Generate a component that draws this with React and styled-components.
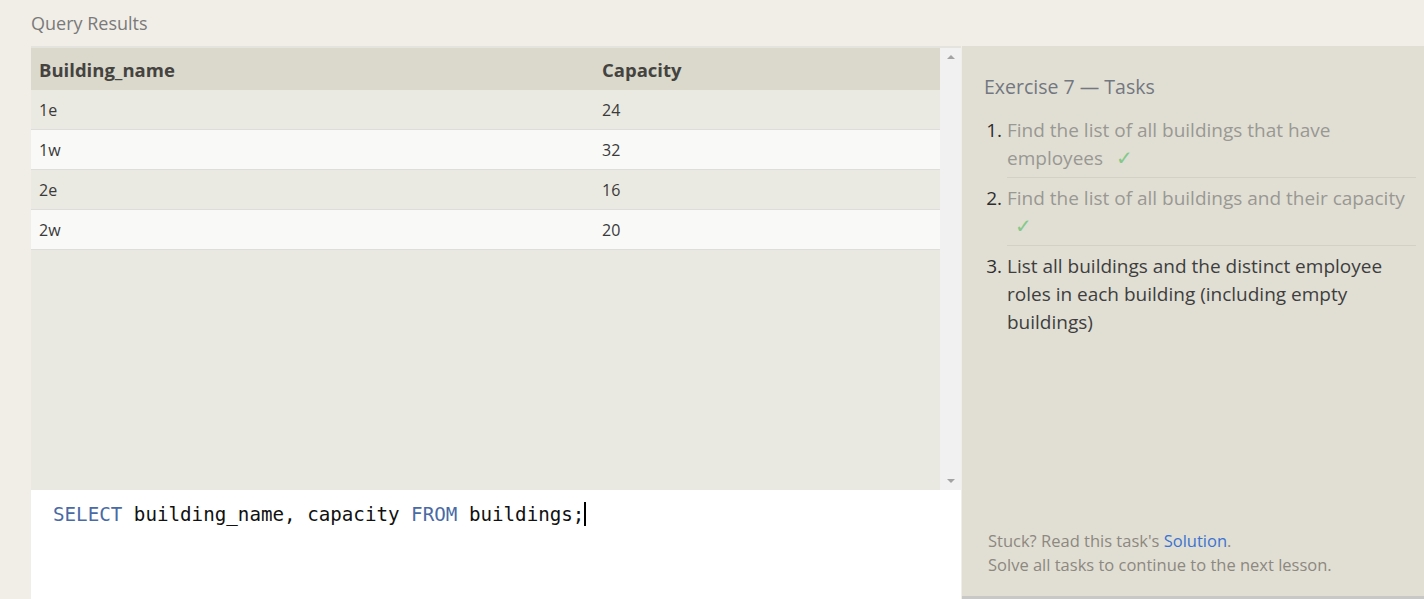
import React from "react";
import styled, { createGlobalStyle } from "styled-components";

const Global = createGlobalStyle`
  html, body { margin: 0; padding: 0; }
  body {
    background: #f1eee7;
    font-family: "Open Sans", "Noto Sans", sans-serif;
    overflow: hidden;
  }
`;

const Page = styled.div`
  width: 1424px;
  height: 599px;
  display: flex;
  flex-direction: column;
  box-sizing: border-box;
  padding-left: 31px;
`;

const Title = styled.div`
  height: 46px;
  box-sizing: border-box;
  padding-top: 11px;
  font-size: 18px;
  line-height: 24px;
  color: #7a7a7a;
`;

const Main = styled.div`
  flex: 1;
  display: flex;
  min-height: 0;
`;

const LeftCol = styled.div`
  width: 930px;
  display: flex;
  flex-direction: column;
  border-top: 2px solid #e4e3dd;
`;

const Results = styled.div`
  height: 442px;
  display: flex;
  background: #eae9e1;
`;

const TableArea = styled.div`
  flex: 1;
  overflow: hidden;
`;

const Table = styled.table`
  width: 100%;
  border-collapse: collapse;
  table-layout: fixed;
`;

const Th = styled.th`
  text-align: left;
  height: 42px;
  padding: 0 8px;
  font-size: 18.5px;
  font-weight: 700;
  color: #454340;
  background: #dad9cc;
  width: ${(p) => p.$w || "auto"};
`;

const Tr = styled.tr`
  background: ${(p) => (p.$alt ? "#f9f9f8" : "#ebeae2")};
  border-bottom: 1px solid #dedddb;
`;

const Td = styled.td`
  height: 39px;
  padding: 0 8px;
  font-size: 16px;
  color: #3a3a3a;
`;

const ScrollBar = styled.div`
  width: 21px;
  background: #f1f1f1;
  display: flex;
  flex-direction: column;
  justify-content: space-between;
  align-items: center;
  padding: 7px 0;
  box-sizing: border-box;
`;

const Arrow = styled.div`
  width: 0;
  height: 0;
  border-left: 4px solid transparent;
  border-right: 4px solid transparent;
  ${(p) =>
    p.$down
      ? "border-top: 4px solid #a3a3a3;"
      : "border-bottom: 4px solid #a3a3a3;"}
`;

const Editor = styled.div`
  flex: 1;
  background: #ffffff;
  padding: 12px 22px 10px;
  font-family: "DejaVu Sans Mono", "Liberation Mono", monospace;
  font-size: 19.2px;
  line-height: 26px;
  color: #111;
  white-space: pre;
`;

const Kw = styled.span`
  color: #4a6aa5;
`;

const Cursor = styled.span`
  display: inline-block;
  width: 2px;
  height: 24px;
  background: #000;
  vertical-align: -5px;
`;

const Side = styled.div`
  flex: 1;
  margin-left: 1px;
  background: #e1dfd4;
  border-bottom: 3px solid #c8c8c6;
  display: flex;
  flex-direction: column;
  padding: 27px 8px 19px 22px;
`;

const SideTitle = styled.div`
  font-size: 19.5px;
  line-height: 28px;
  color: #737780;
  margin-bottom: 15px;
`;

const TaskList = styled.ol`
  margin: 0;
  padding: 0 0 0 23px;
  flex: 1;
`;

const Task = styled.li`
  font-size: 19px;
  line-height: 28px;
  color: ${(p) => (p.$done ? "#999893" : "#3e3e3e")};
  padding-bottom: ${(p) => (p.$last ? "0" : "5px")};
  margin-bottom: 6px;
  border-bottom: ${(p) => (p.$last ? "none" : "1px solid #d3d1c6")};
  &::marker {
    color: #2e2e2e;
  }
`;

const Check = styled.span`
  color: #84c98a;
  margin-left: 8px;
  font-size: 20px;
  line-height: 1;
`;

const Footer = styled.div`
  font-size: 16.5px;
  line-height: 24px;
  color: #8d8880;
  padding-left: 4px;
`;

const Link = styled.a`
  color: #3b73d0;
  text-decoration: none;
`;

const rows = [
  ["1e", "24"],
  ["1w", "32"],
  ["2e", "16"],
  ["2w", "20"],
];

export default function App() {
  return (
    <>
      <Global />
      <Page>
        <Title>Query Results</Title>
        <Main>
          <LeftCol>
            <Results>
              <TableArea>
                <Table>
                  <thead>
                    <tr>
                      <Th $w="547px">Building_name</Th>
                      <Th>Capacity</Th>
                    </tr>
                  </thead>
                  <tbody>
                    {rows.map((r, i) => (
                      <Tr key={r[0]} $alt={i % 2 === 1}>
                        <Td>{r[0]}</Td>
                        <Td>{r[1]}</Td>
                      </Tr>
                    ))}
                  </tbody>
                </Table>
              </TableArea>
              <ScrollBar>
                <Arrow />
                <Arrow $down />
              </ScrollBar>
            </Results>
            <Editor>
              <Kw>SELECT</Kw> building_name, capacity <Kw>FROM</Kw> buildings;
              <Cursor />
            </Editor>
          </LeftCol>
          <Side>
            <SideTitle>Exercise 7 — Tasks</SideTitle>
            <TaskList>
              <Task $done>
                Find the list of all buildings that have employees{" "}
                <Check>✓</Check>
              </Task>
              <Task $done>
                Find the list of all buildings and their capacity{" "}
                <Check>✓</Check>
              </Task>
              <Task $last>
                List all buildings and the distinct employee roles in each
                building (including empty buildings)
              </Task>
            </TaskList>
            <Footer>
              Stuck? Read this task's <Link href="#">Solution</Link>.
              <br />
              Solve all tasks to continue to the next lesson.
            </Footer>
          </Side>
        </Main>
      </Page>
    </>
  );
}
